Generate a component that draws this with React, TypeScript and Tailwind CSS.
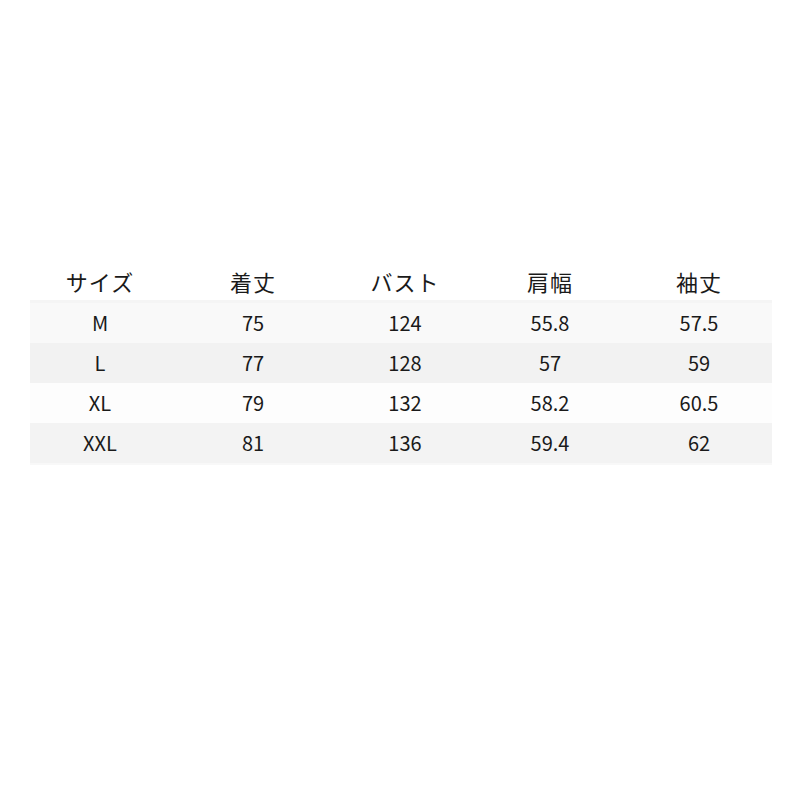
const headers = ['サイズ', '着丈', 'バスト', '肩幅', '袖丈'];

const rows = [
  { cells: ['M', '75', '124', '55.8', '57.5'], bg: 'bg-[#f9f9f9]' },
  { cells: ['L', '77', '128', '57', '59'], bg: 'bg-[#f2f2f2]' },
  { cells: ['XL', '79', '132', '58.2', '60.5'], bg: 'bg-[#fdfdfd]' },
  { cells: ['XXL', '81', '136', '59.4', '62'], bg: 'bg-[#f3f3f3]' },
];

const cols = 'grid grid-cols-[140px_166px_138px_152px_146px]';

export default function App() {
  return (
    <div className="w-[800px] h-[800px] bg-white pt-[263px] pl-[30px] text-[#1a1a1a]">
      <div className="w-[742px]">
        <div
          className={`${cols} h-10 items-center text-center text-[22px] font-normal border-b-[3px] border-[#f5f5f5]`}
          style={{ fontFamily: '"Noto Sans CJK JP", "Noto Sans", sans-serif' }}
        >
          {headers.map((h) => (
            <span key={h} className="tracking-[1px]">{h}</span>
          ))}
        </div>
        {rows.map((row) => (
          <div
            key={row.cells[0]}
            className={`${cols} h-10 items-center text-center text-[20px] ${row.bg}`}
            style={{ fontFamily: '"Noto Sans CJK JP", "Noto Sans", sans-serif' }}
          >
            {row.cells.map((c, i) => (
              <span key={i}>{c}</span>
            ))}
          </div>
        ))}
        <div className="h-[2px] bg-[#f8f8f8]" />
      </div>
    </div>
  );
}
